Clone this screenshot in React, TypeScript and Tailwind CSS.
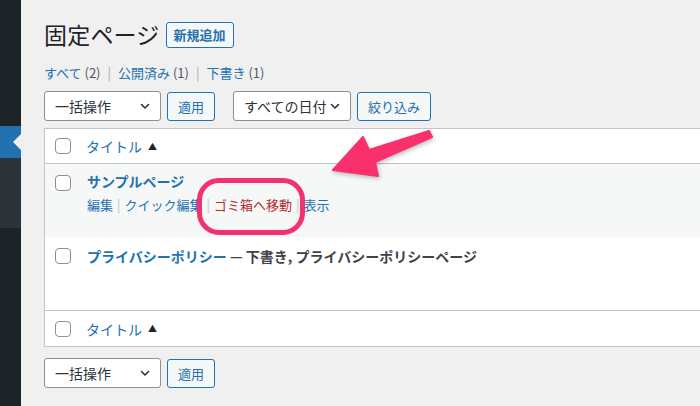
import React from "react";

const font = { fontFamily: '"Noto Sans CJK JP", "Noto Sans", sans-serif' };

function Chevron() {
  return (
    <svg width="12" height="12" viewBox="0 0 12 12" className="shrink-0">
      <path d="M2.5 4.5 L6 8 L9.5 4.5" fill="none" stroke="#2c3338" strokeWidth="1.6" strokeLinecap="round" strokeLinejoin="round" />
    </svg>
  );
}

function Select({ label, w }: { label: string; w: string }) {
  return (
    <div className={`${w} h-[30px] flex items-center justify-between pl-[10px] pr-[9px] bg-white border border-[#8c8f94] rounded-[3px] text-[14px] text-[#2c3338] leading-none`}>
      <span>{label}</span>
      <Chevron />
    </div>
  );
}

function Btn({ label, w }: { label: string; w: string }) {
  return (
    <div className={`${w} h-[29px] flex items-center justify-center bg-[#f6f7f7] border border-[#2271b1] rounded-[3px] text-[13px] text-[#2271b1] leading-none`}>
      {label}
    </div>
  );
}

function Check() {
  return <div className="w-[16px] h-[16px] shrink-0 bg-white border border-[#8c8f94] rounded-[4px]" />;
}

function Sep() {
  return <span className="text-[#c3c4c7] px-[4px]">|</span>;
}

export default function App() {
  return (
    <div className="relative w-[700px] h-[406px] overflow-hidden flex bg-[#f0f0f1]" style={font}>
      <aside className="w-[21px] shrink-0 flex flex-col bg-[#1d2327]">
        <div className="h-[126px]" />
        <div className="h-[32px] bg-[#2271b1] relative">
          <div className="absolute right-0 top-1/2 -translate-y-1/2 w-0 h-0 border-y-[8px] border-y-transparent border-r-[8px] border-r-[#f0f0f1]" />
        </div>
        <div className="h-[70px] bg-[#2c3338]" />
      </aside>

      <main className="flex-1 pl-[23px] pt-[21px] flex flex-col">
        <div className="flex items-center h-[27px]">
          <h1 className="text-[23px] leading-none text-[#1d2327] font-normal tracking-[0.2px]">固定ページ</h1>
          <div className="ml-[6px] h-[26px] px-[7px] flex items-center bg-[#f6f7f7] border border-[#2271b1] rounded-[3px] text-[13px] font-semibold text-[#2271b1] leading-none">
            新規追加
          </div>
        </div>

        <div className="mt-[14px] h-[20px] flex items-center text-[13px] leading-none text-[#2271b1]">
          <span>すべて <span className="text-[#50575e]">(2)</span></span>
          <span className="text-[#a7aaad] px-[7px]">|</span>
          <span>公開済み <span className="text-[#50575e]">(1)</span></span>
          <span className="text-[#a7aaad] px-[7px]">|</span>
          <span>下書き <span className="text-[#50575e]">(1)</span></span>
        </div>

        <div className="mt-[9px] flex items-center">
          <Select label="一括操作" w="w-[117px]" />
          <div className="ml-[6px]"><Btn label="適用" w="w-[48px]" /></div>
          <div className="ml-[18px]"><Select label="すべての日付" w="w-[118px]" /></div>
          <div className="ml-[6px]"><Btn label="絞り込み" w="w-[74px]" /></div>
        </div>

        <div className="mt-[7px] w-[680px] bg-white border border-[#c3c4c7] flex flex-col">
          <div className="h-[35px] flex items-center pl-[10px] border-b border-[#c3c4c7]">
            <Check />
            <span className="ml-[15px] text-[14px] text-[#2271b1] leading-none">タイトル</span>
            <span className="ml-[6px] text-[9px] text-[#1d2327] leading-none">▲</span>
          </div>

          <div className="h-[73px] bg-[#f6f7f7] flex items-start pl-[10px] pt-[11px]">
            <Check />
            <div className="ml-[16px] flex flex-col">
              <span className="text-[14px] font-bold text-[#2271b1] leading-none mt-[-1px]">サンプルページ</span>
              <div className="mt-[10px] flex items-center text-[13px] leading-none text-[#2271b1]">
                <span>編集</span>
                <Sep />
                <span>クイック編集</span>
                <Sep />
                <span className="text-[#b32d2e]">ゴミ箱へ移動</span>
                <Sep />
                <span>表示</span>
              </div>
            </div>
          </div>

          <div className="h-[73px] flex items-start pl-[10px] pt-[11px]">
            <Check />
            <div className="ml-[16px] text-[14px] font-bold leading-none mt-[1px]">
              <span className="text-[#2271b1]">プライバシーポリシー</span>
              <span className="text-[#3c434a]"> — 下書き, プライバシーポリシーページ</span>
            </div>
          </div>

          <div className="h-[36px] flex items-center pl-[10px] border-t border-[#c3c4c7]">
            <Check />
            <span className="ml-[15px] text-[14px] text-[#2271b1] leading-none">タイトル</span>
            <span className="ml-[6px] text-[9px] text-[#1d2327] leading-none">▲</span>
          </div>
        </div>

        <div className="mt-[11px] flex items-center">
          <Select label="一括操作" w="w-[117px]" />
          <div className="ml-[6px]"><Btn label="適用" w="w-[48px]" /></div>
        </div>
      </main>

      <div className="absolute left-[197px] top-[178px] w-[108px] h-[57px] border-[5px] border-[#f4306d] rounded-[22px]" />

      <svg className="absolute left-0 top-0 pointer-events-none" width="700" height="406" style={{ filter: "drop-shadow(1px 2px 2px rgba(0,0,0,0.25))" }}>
        <polygon points="333,170 363,137 369,150 429,131 432,137 375,162 378,176" fill="#f9306b" strokeLinejoin="round" stroke="#f9306b" strokeWidth="2" />
      </svg>
    </div>
  );
}
